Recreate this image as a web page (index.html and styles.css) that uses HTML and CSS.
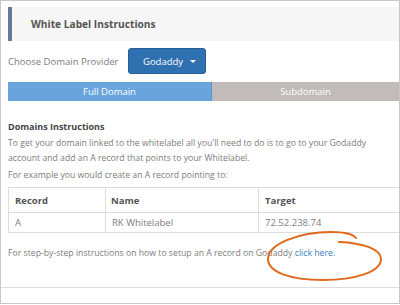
FILE: index.html
```html
<!DOCTYPE html>
<html lang="en">
<head>
  <meta charset="UTF-8">
  <title>White Label Instructions</title>
  <link rel="stylesheet" href="styles.css">
</head>
<body>
  <div class="frame">
    <header class="panel-head">
      <h1>White Label Instructions</h1>
    </header>

    <div class="provider">
      <span class="provider-label">Choose Domain Provider</span>
      <button class="btn-drop"><span>Godaddy</span><i class="caret"></i></button>
    </div>

    <div class="tabs">
      <div class="tab active">Full Domain</div>
      <div class="tab">Subdomain</div>
    </div>

    <section class="content">
      <h2>Domains Instructions</h2>
      <p class="intro">To get your domain linked to the whitelabel all you'll need to do is to go to your Godaddy account and add an A record that points to your Whitelabel.</p>
      <p class="example">For example you would create an A record pointing to:</p>

      <table>
        <thead>
          <tr><th class="c1">Record</th><th class="c2">Name</th><th>Target</th></tr>
        </thead>
        <tbody>
          <tr><td>A</td><td>RK Whitelabel</td><td>72.52.238.74</td></tr>
        </tbody>
      </table>

      <p class="steps">For step-by-step instructions on how to setup an A record on Godaddy <a href="#">click here.</a></p>

      <!-- hand-drawn highlight round the link -->
      <svg class="circle" width="124" height="60" viewBox="0 0 124 60">
        <path d="M76 15 C 100 16, 118 22, 118 32 C 118 45, 92 53, 60 53 C 27 53, 5 45, 5 32 C 5 17, 36 5, 68 5 C 80 5, 90 7, 93 11" fill="none" stroke="#e2681c" stroke-width="2" stroke-linecap="round"/>
      </svg>
    </section>

    <div class="foot"></div>
  </div>
</body>
</html>
```

FILE: styles.css
```css
* {
  box-sizing: border-box;
}
body {
  margin: 0;
  font-family: 'Open Sans', sans-serif;
  background: #fff;
}
.frame {
  width: 400px;
  height: 304px;
  border: 1px solid #c8c8c8;
  padding: 6px 0 0 7px;
  color: #7d7d7d;
  font-size: 8.7px;
  position: relative;
  overflow: hidden;
}
.panel-head {
  background: #f6f6f6;
  border-left: 4px solid #66779a;
  height: 34px;
  display: flex;
  align-items: center;
  padding-left: 19px;
}
.panel-head h1 {
  margin: 0;
  font-size: 10.2px;
  font-weight: 700;
  color: #555;
}
.provider {
  display: flex;
  align-items: center;
  margin-top: 7px;
  height: 26px;
  font-size: 9.5px;
}
.provider-label {
  width: 120px;
}
.btn-drop {
  width: 78px;
  height: 26px;
  background: #2f70b1;
  border: 1px solid #285f97;
  border-radius: 3px;
  color: #fff;
  font-family: inherit;
  font-size: 9.5px;
  padding: 0 9px 0 14px;
  display: flex;
  align-items: center;
  justify-content: space-between;
}
.caret {
  width: 0;
  height: 0;
  border-left: 3px solid transparent;
  border-right: 3px solid transparent;
  border-top: 3px solid #fff;
}
.tabs {
  display: flex;
  margin-top: 8px;
  height: 19px;
}
.tab {
  flex: 1;
  background: #c1bcba;
  color: #fff;
  text-align: center;
  line-height: 19px;
  font-size: 9.5px;
}
.tab.active {
  background: #69a5dc;
  border-right: 1px solid #5a93c8;
  flex: 0 0 204px;
}
.content {
  padding-top: 19px;
}
.content h2 {
  margin: 0 0 3px;
  font-size: 9px;
  line-height: 13px;
  font-weight: 700;
  color: #444;
}
.content p {
  margin: 0;
  line-height: 15px;
}
.content p.intro {
  padding-right: 20px;
}
.content p.example {
  margin-top: 2px;
}
table {
  width: 391px;
  border-collapse: collapse;
  margin-top: 4px;
}
th, td {
  border: 1px solid #ddd;
  text-align: left;
  padding: 0 6px;
  font-size: 9.5px;
}
th {
  height: 25px;
  color: #555;
  font-weight: 700;
}
td {
  height: 20px;
}
th.c1 {
  width: 97px;
}
th.c2 {
  width: 153px;
  padding-left: 5px;
}
table tr > :last-child {
  border-right: none;
}
.content p.steps {
  margin-top: 13px;
}
.steps a {
  color: #3e80c0;
  text-decoration: none;
}
.circle {
  position: absolute;
  left: 262px;
  top: 226px;
}
.foot {
  position: absolute;
  left: 0;
  right: 0;
  top: 286px;
  border-top: 1px solid #ddd;
}
```
